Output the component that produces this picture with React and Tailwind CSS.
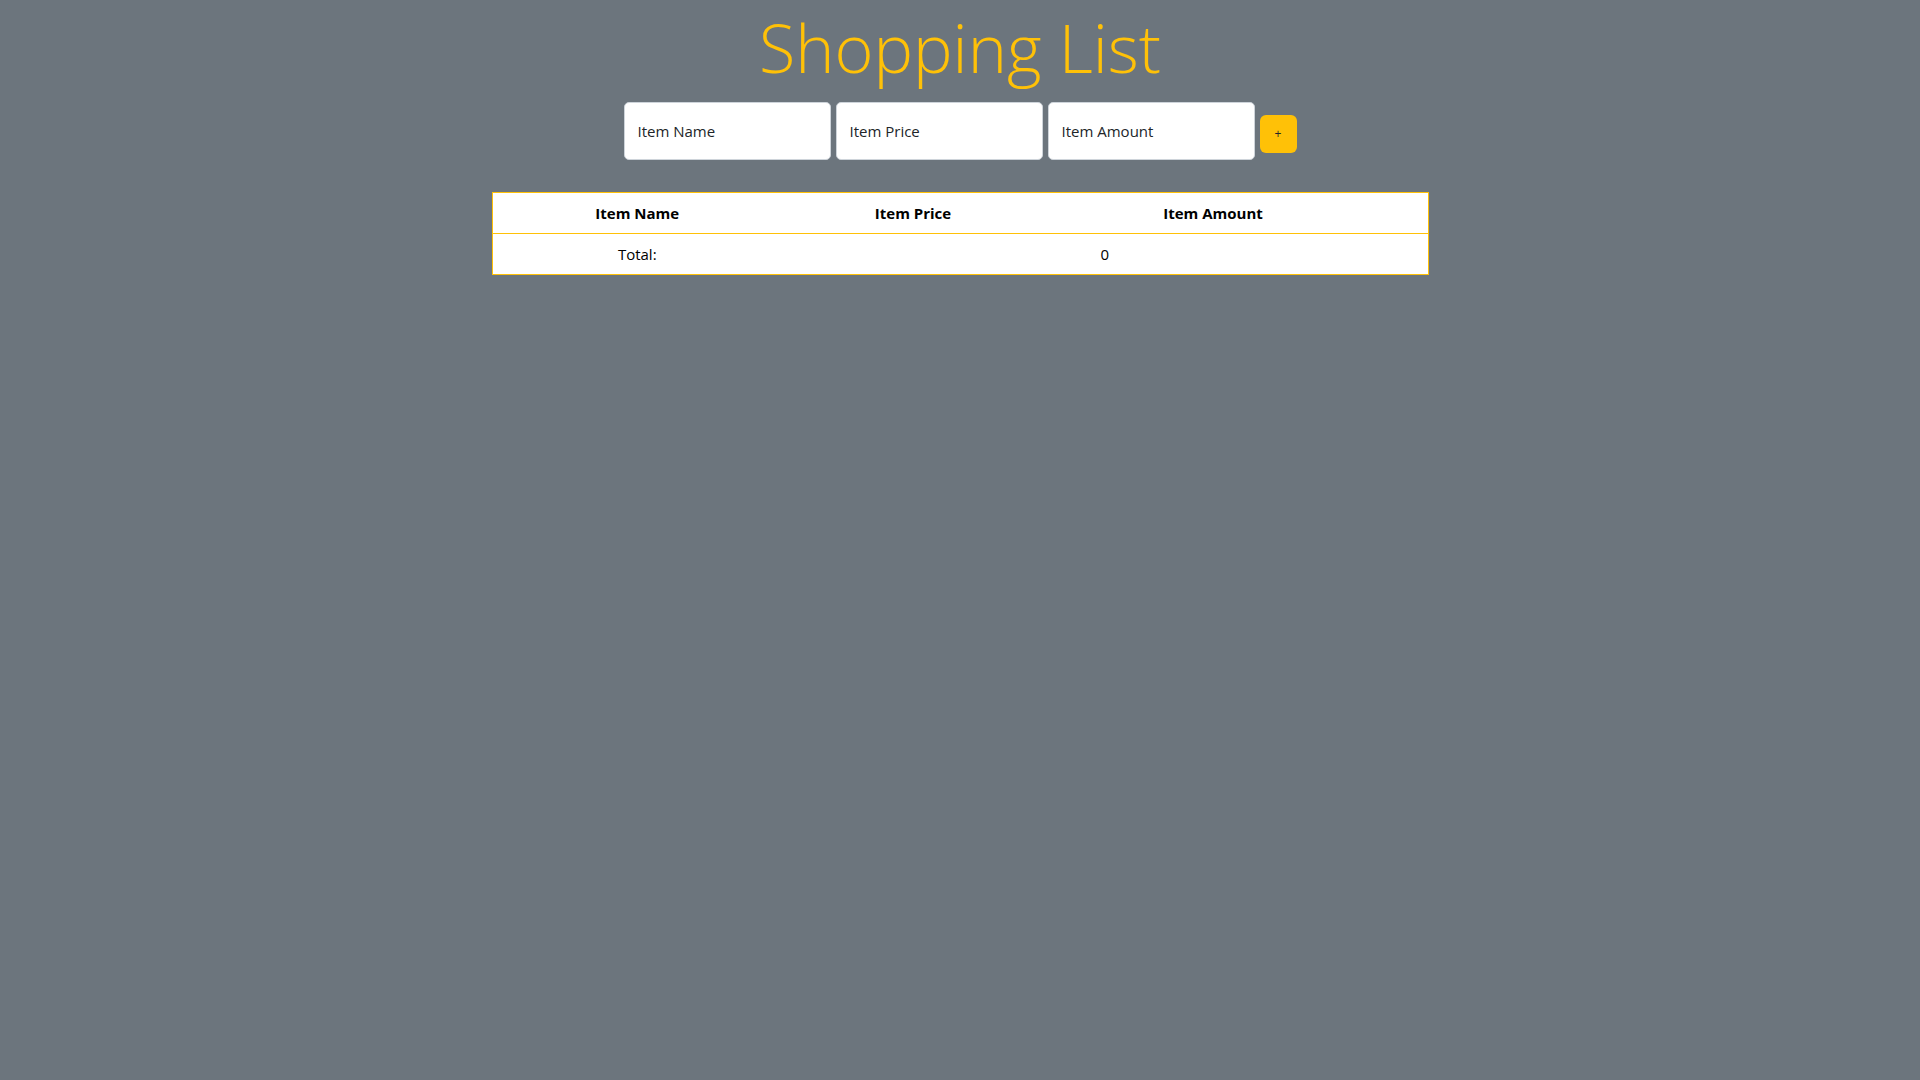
import React from "react";

export default function App() {
  return (
    <div className="min-h-screen bg-[#6c757d] font-['Open_Sans',sans-serif] text-[#212529]">
      <div className="flex h-[102px] justify-center pt-[14px]">
        <h1 className="text-[66.5px] font-light leading-none text-[#ffc107]">Shopping List</h1>
      </div>
      <div className="flex justify-center gap-[5px]">
        <input
          className="h-[58px] w-[207px] rounded-[5px] border border-[#ced4da] bg-white px-[13px] text-[15px] text-[#212529] placeholder:text-[#212529] outline-none"
          placeholder="Item Name"
        />
        <input
          className="h-[58px] w-[207px] rounded-[5px] border border-[#ced4da] bg-white px-[13px] text-[15px] text-[#212529] placeholder:text-[#212529] outline-none"
          placeholder="Item Price"
        />
        <input
          className="h-[58px] w-[207px] rounded-[5px] border border-[#ced4da] bg-white px-[13px] text-[15px] text-[#212529] placeholder:text-[#212529] outline-none"
          placeholder="Item Amount"
        />
        <button className="mt-[13px] h-[38px] w-[37px] rounded-[6px] bg-[#ffc107] text-[12px] leading-none text-[#212529]">
          +
        </button>
      </div>
      <div className="mt-[32px] flex justify-center">
        <table className="w-[936px] table-fixed border-collapse border border-[#ffc107] bg-white text-[15px]">
          <colgroup>
            <col className="w-[290px]" />
            <col className="w-[262px]" />
            <col className="w-[338px]" />
            <col className="w-[46px]" />
          </colgroup>
          <thead>
            <tr className="h-[41px] border-b border-[#ffc107]">
              <th className="text-center font-bold text-black">Item Name</th>
              <th className="text-center font-bold text-black">Item Price</th>
              <th className="text-center font-bold text-black">Item Amount</th>
              <th></th>
            </tr>
          </thead>
          <tbody>
            <tr className="h-[41px]">
              <td className="text-center text-black">Total:</td>
              <td colSpan={3} className="text-center text-black">0</td>
            </tr>
          </tbody>
        </table>
      </div>
    </div>
  );
}
